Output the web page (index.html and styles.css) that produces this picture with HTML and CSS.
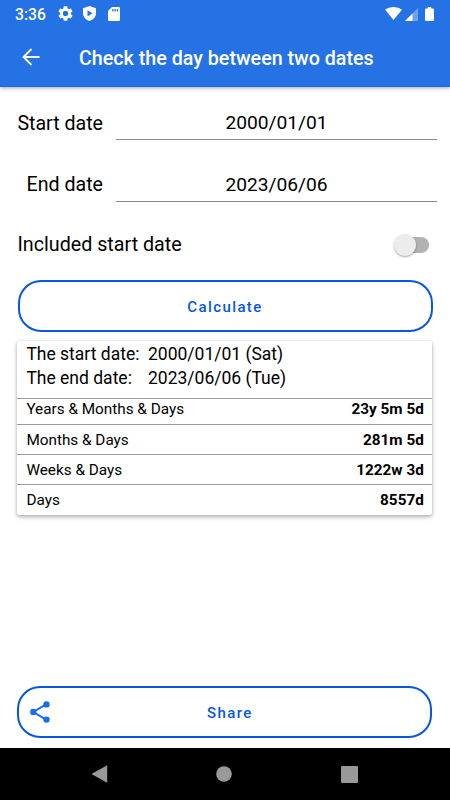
FILE: index.html
```html
<!DOCTYPE html>
<html lang="en">
<head>
<meta charset="utf-8">
<title>Check the day between two dates</title>
<link rel="stylesheet" href="styles.css">
</head>
<body>
<div class="screen">
  <header class="top">
    <div class="status">
      <span class="clock">3:36</span>
      <svg class="gear" viewBox="2 2 20 20"><path d="M19.14 12.94c.04-.3.06-.61.06-.94s-.02-.64-.07-.94l2.03-1.58a.49.49 0 0 0 .12-.61l-1.92-3.32a.49.49 0 0 0-.59-.22l-2.39.96a7 7 0 0 0-1.62-.94l-.36-2.54A.48.48 0 0 0 13.92 2.4h-3.84a.48.48 0 0 0-.47.41l-.36 2.54a7.4 7.4 0 0 0-1.62.94l-2.39-.96a.48.48 0 0 0-.59.22L2.74 8.87a.48.48 0 0 0 .12.61l2.03 1.58a6 6 0 0 0 0 1.88l-2.03 1.58a.49.49 0 0 0-.12.61l1.92 3.32c.12.22.37.29.59.22l2.39-.96c.5.38 1.03.7 1.62.94l.36 2.54c.05.24.24.41.48.41h3.84c.24 0 .44-.17.47-.41l.36-2.54a7.4 7.4 0 0 0 1.62-.94l2.39.96c.22.08.47 0 .59-.22l1.92-3.32a.48.48 0 0 0-.12-.61zM12 15.6a3.6 3.6 0 1 1 0-7.2 3.6 3.6 0 0 1 0 7.2z"/></svg>
      <svg class="shield" viewBox="0 0 13 15"><path fill-rule="evenodd" d="M6.500 0 13 2.300V7c0 4-2.700 6.900-6.500 8C2.700 13.900 0 11 0 7V2.300zM4.500 4.200v6.200l5-3.100z"/></svg>
      <svg class="sdcard" viewBox="0 0 12 14"><path fill-rule="evenodd" d="M4 0h6.700Q12 0 12 1.300v11.400Q12 14 10.700 14H1.300Q0 14 0 12.700V4zM4.200 2v2.600h1.300V2zm2.300 0v2.600h1.300V2zm2.300 0v2.600h1.300V2z"/></svg>
      <svg class="wifi" viewBox="0 0 17 13"><path d="M0 2.600Q3.600 0 8.500 0T17 2.600L8.500 13z"/></svg>
      <svg class="signal" viewBox="0 0 13 13"><path opacity=".35" d="M13 0v13H0z"/><path d="M7.500 5.500V13H0z"/></svg>
      <svg class="battery" viewBox="0 0 9 14"><path d="M2.700 0h3.600v1.400H8q1 0 1 1V13q0 1-1 1H1q-1 0-1-1V2.400q0-1 1-1h1.700z"/></svg>
    </div>
    <div class="appbar">
      <svg class="back" viewBox="0 0 18 18"><path d="M17.500 9H1.500M9.500 1 1.500 9l8 8"/></svg>
      <h1>Check the day between two dates</h1>
    </div>
  </header>
  <main>
    <div class="field"><label>Start date</label><div class="value first">2000/01/01</div></div>
    <div class="field"><label>End date</label><div class="value">2023/06/06</div></div>
    <div class="option"><span>Included start date</span><div class="switch"><div class="thumb"></div></div></div>
    <button class="pill">Calculate</button>
    <section class="card">
      <div class="dates">
        <span>The start date:</span><span>2000/01/01 (Sat)</span>
        <span>The end date:</span><span>2023/06/06 (Tue)</span>
      </div>
      <div class="row compact"><span>Years &amp; Months &amp; Days</span><b>23y 5m 5d</b></div>
      <div class="row"><span>Months &amp; Days</span><b>281m 5d</b></div>
      <div class="row"><span>Weeks &amp; Days</span><b>1222w 3d</b></div>
      <div class="row last"><span>Days</span><b>8557d</b></div>
    </section>
    <button class="pill share">
      <svg viewBox="0 0 20 22"><path d="M16.500 3.200 3.300 11l13.200 7.800"/><circle cx="16.500" cy="3.400" r="3.200"/><circle cx="3.300" cy="11" r="3.200"/><circle cx="16.500" cy="18.600" r="3.200"/></svg>
      <span>Share</span>
    </button>
  </main>
  <nav>
    <svg viewBox="0 0 16 18"><path d="M15.200.300v17.400L.300 9.600q-.600-.600 0-1.200z"/></svg>
    <svg viewBox="0 0 16 16"><circle cx="8" cy="8" r="7.800"/></svg>
    <svg viewBox="0 0 17 17"><rect width="17" height="17" rx="1.200"/></svg>
  </nav>
</div>
</body>
</html>
```
FILE: styles.css
```css
* { box-sizing: border-box; }
body { margin: 0; font-family: Roboto, "Liberation Sans", sans-serif; color: #000; background: #fff; }
.screen { width: 450px; height: 800px; display: flex; flex-direction: column; overflow: hidden; }
.top { height: 87px; flex: none; background: #2572e4; color: #fff; border-bottom: 1px solid #1268e8; box-shadow: 0 1px 4px rgba(0, 0, 0, .35); }
.status { height: 27px; display: flex; align-items: center; padding: 0 16px 0 15px; }
.status svg { fill: #fff; flex: none; }
.clock { width: 43px; font-size: 15.700px; line-height: 27px; font-weight: 500; padding-top: 1px; }
.gear { width: 15px; height: 15px; }
.shield { width: 13px; height: 15px; margin-left: 10px; }
.sdcard { width: 12px; height: 14px; margin-left: 12px; }
.wifi { width: 17px; height: 13px; margin-left: auto; }
.signal { width: 13px; height: 13px; margin: 1px 0 0 3px; }
.battery { width: 9px; height: 14px; margin-left: 7px; }
.appbar { height: 59px; display: flex; align-items: center; padding-left: 22px; }
.back { width: 18px; height: 18px; fill: none; stroke: #fff; stroke-width: 1.8; }
h1 { margin: 4px 0 0 39px; font-size: 19.7px; line-height: 24px; font-weight: 500; white-space: nowrap; }
main { flex: 1; display: flex; flex-direction: column; padding: 14px 17px 0 17px; }
.field { display: flex; align-items: flex-start; height: 61.500px; margin-right: -4px; font-size: 19.6px; line-height: 44px; }
.field label { width: 86px; text-align: right; white-space: nowrap; }
.value { flex: 1; height: 39.500px; margin-left: 13px; text-align: center; border-bottom: 1px solid #888; font-size: 19.2px; line-height: 43px; }
.field:first-child { line-height: 45px; }
.first { height: 39px; line-height: 43px; }
.option { height: 44px; margin-top: -2px; display: flex; justify-content: space-between; align-items: center; font-size: 19.7px; }
.option span { padding-left: .5px; }
.switch { width: 31px; height: 16px; margin: 2px 4px 0 0; border-radius: 8px; background: #b2b2b2; display: flex; align-items: center; }
.thumb { width: 22px; height: 22px; margin-left: -4px; flex: none; border-radius: 50%; background: #ececec; box-shadow: 0 1px 2px rgba(0, 0, 0, .35); }
.pill { position: relative; flex: none; width: 415px; height: 52px; margin: 14px 0 0 .5px; padding: 1px 0 0; border: 2px solid #0757e4; border-radius: 23px; background: #fff; color: #0757e4; font: 500 15px/49px Roboto, sans-serif; letter-spacing: 1.4px; text-align: center; }
.card { flex: none; width: 415px; height: 174px; margin: 9px 0 0 .4px; border-radius: 2px; background: #fff; box-shadow: 0 2px 4px rgba(0, 0, 0, .3), 0 0 2px rgba(0, 0, 0, .16); }
.dates { height: 58px; display: grid; grid-template-columns: 121.600px 1fr; grid-auto-rows: 24px; align-content: start; padding: 1px 9px 0; font-size: 17.500px; line-height: 25px; border-bottom: 1px solid #9b9b9b; }
.row { height: 30.300px; display: flex; justify-content: space-between; padding: 0 8.600px 0 9px; font-size: 15.300px; line-height: 31px; border-bottom: 1px solid #9b9b9b; }
.compact { height: 25.700px; line-height: 20px; }
.last { border: 0; }
.row b { font-weight: 700; }
.share { margin: auto 0 9.600px .4px; padding-left: 10px; }
.share svg { position: absolute; left: 10.500px; top: 13px; width: 20px; height: 22px; fill: #1a6eea; }
.share svg path { fill: none; stroke: #1a6eea; stroke-width: 2; }
nav { flex: none; height: 52px; background: #000; display: flex; justify-content: space-between; align-items: center; padding: 0 92px 0 91.500px; }
nav svg { fill: #999; width: 16px; height: 18px; }
nav svg:last-child { width: 17px; height: 17px; }
```
